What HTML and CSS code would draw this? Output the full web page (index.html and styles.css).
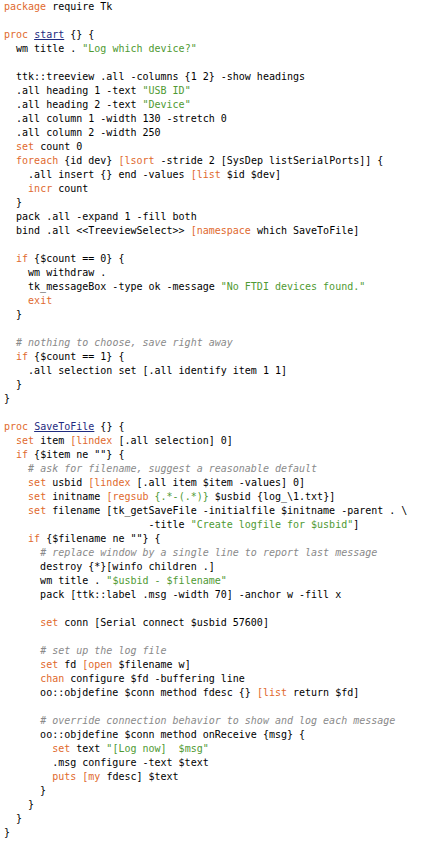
FILE: index.html
```html
<!DOCTYPE html>
<html>
<head>
<meta charset="utf-8">
<link rel="stylesheet" href="styles.css">
</head>
<body>
<pre class="code"><span class="k">package</span> require Tk

<span class="k">proc</span> <span class="p">start</span> {} {
  wm title . <span class="s">"Log which device?"</span>

  ttk::treeview .all -columns {1 2} -show headings
  .all heading 1 -text <span class="s">"USB ID"</span>
  .all heading 2 -text <span class="s">"Device"</span>
  .all column 1 -width 130 -stretch 0
  .all column 2 -width 250
  <span class="k">set</span> count 0
  <span class="k">foreach</span> {id dev} <span class="k">[lsort</span> -stride 2 [SysDep listSerialPorts]] {
    .all insert {} end -values <span class="k">[list</span> $id $dev]
    <span class="k">incr</span> count
  }
  pack .all -expand 1 -fill both
  bind .all &lt;&lt;TreeviewSelect&gt;&gt; <span class="k">[namespace</span> which SaveToFile]

  <span class="k">if</span> {$count == 0} {
    wm withdraw .
    tk_messageBox -type ok -message <span class="s">"No FTDI devices found."</span>
    <span class="k">exit</span>
  }

  <span class="c"># nothing to choose, save right away</span>
  <span class="k">if</span> {$count == 1} {
    .all selection set [.all identify item 1 1]
  }
}

<span class="k">proc</span> <span class="p">SaveToFile</span> {} {
  <span class="k">set</span> item <span class="k">[lindex</span> [.all selection] 0]
  <span class="k">if</span> {$item ne ""} {
    <span class="c"># ask for filename, suggest a reasonable default</span>
    <span class="k">set</span> usbid <span class="k">[lindex</span> [.all item $item -values] 0]
    <span class="k">set</span> initname <span class="k">[regsub</span> <span class="s">{.*-(.*)}</span> $usbid {log_\1.txt}]
    <span class="k">set</span> filename [tk_getSaveFile -initialfile $initname -parent . \
                        -title <span class="s">"Create logfile for $usbid"</span>]
    <span class="k">if</span> {$filename ne ""} {
      <span class="c"># replace window by a single line to report last message</span>
      destroy {*}[winfo children .]
      wm title . <span class="s">"$usbid - $filename"</span>
      pack [ttk::label .msg -width 70] -anchor w -fill x

      <span class="k">set</span> conn [Serial connect $usbid 57600]

      <span class="c"># set up the log file</span>
      <span class="k">set</span> fd <span class="k">[open</span> $filename w]
      <span class="k">chan</span> configure $fd -buffering line
      oo::objdefine $conn method fdesc {} <span class="k">[list</span> return $fd]

      <span class="c"># override connection behavior to show and log each message</span>
      oo::objdefine $conn method onReceive {msg} {
        <span class="k">set</span> text <span class="s">"[Log now]  $msg"</span>
        .msg configure -text $text
        <span class="k">puts</span> <span class="k">[my</span> fdesc] $text
      }
    }
  }
}</pre>
</body>
</html>
```
FILE: styles.css
```css
html, body {
  margin: 0;
  padding: 0;
  background: #ffffff;
}

.code {
  margin: 0;
  padding: 0 0 0 4px;
  font-family: "DejaVu Sans Mono", monospace;
  font-size: 10px;
  line-height: 14px;
  color: #000000;
  white-space: pre;
}

.k {
  color: #df6a2e;
}

.s {
  color: #4f9a33;
}

.c {
  color: #8a8a8a;
  font-style: italic;
}

.p {
  color: #1f2b80;
  text-decoration: underline;
}
```
